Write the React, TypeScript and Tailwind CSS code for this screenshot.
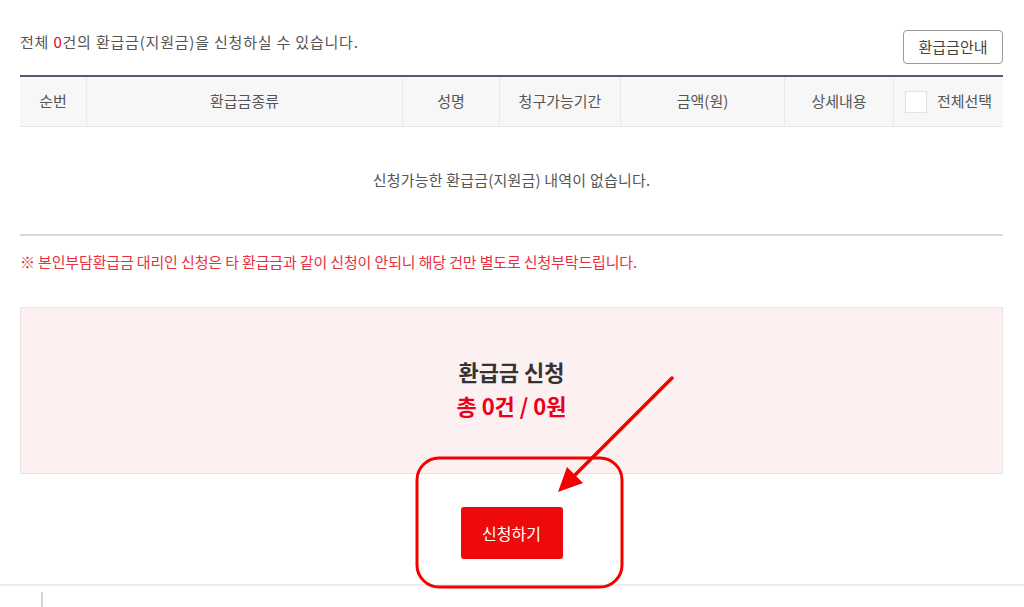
const columns = [
  { label: "순번", width: "w-[66px]" },
  { label: "환급금종류", width: "w-[316px]" },
  { label: "성명", width: "w-[97px]" },
  { label: "청구가능기간", width: "w-[121px]" },
  { label: "금액(원)", width: "w-[164px]" },
  { label: "상세내용", width: "w-[109px]" },
]

export default function App() {
  return (
    <div
      className="relative w-[1024px] h-[607px] overflow-hidden bg-white text-[#555]"
      style={{ fontFamily: '"Noto Sans CJK KR", "Noto Sans", sans-serif' }}
    >
      <div className="pl-[20px] pr-[21px] pt-[30px] w-[1024px]">
        {/* summary + guide button */}
        <div className="flex justify-between items-start h-[34px] mb-[11px]">
          <p className="mt-[2px] text-[15px] leading-[20px] tracking-[0.8px] text-[#555]">
            전체 <span className="text-[#e8001c]">0</span>건의 환급금(지원금)을 신청하실 수 있습니다.
          </p>
          <button className="h-[34px] w-[100px] rounded-[4px] border border-[#9a9a9a] bg-white text-[15px] text-[#444]">
            환급금안내
          </button>
        </div>

        {/* table */}
        <div className="border-t-2 border-[#555a6e]">
          <div className="flex h-[50px] bg-[#f7f7f7] border-b border-[#e6e6e6] text-[15px] text-[#555]">
            {columns.map((c, i) => (
              <div
                key={c.label}
                className={`${c.width} flex items-center justify-center ${i > 0 ? "border-l border-[#e9e9e9]" : ""}`}
              >
                {c.label}
              </div>
            ))}
            <div className="flex-1 flex items-center justify-center gap-[10px] border-l border-[#e9e9e9]">
              <span className="w-[22px] h-[22px] bg-white border border-[#e3e3e3]" />
              <span>전체선택</span>
            </div>
          </div>
          <div className="h-[109px] flex items-center justify-center border-b-2 border-[#d8d8dc] text-[15px] tracking-[0.2px] text-[#555]">
            신청가능한 환급금(지원금) 내역이 없습니다.
          </div>
        </div>

        <p className="mt-[16px] text-[15px] leading-[20px] tracking-[-0.15px] text-[#e8303f]">
          ※ 본인부담환급금 대리인 신청은 타 환급금과 같이 신청이 안되니 해당 건만 별도로 신청부탁드립니다.
        </p>

        {/* total box */}
        <div className="mt-[35px] h-[167px] pb-[6px] flex flex-col items-center justify-center bg-[#fdf0f1] border border-[#ece2e4] font-bold text-[22px] leading-[34px]">
          <div className="text-[#333]">환급금 신청</div>
          <div className="text-[#e8001c]">총 0건 / 0원</div>
        </div>

        <div className="flex justify-center mt-[33px] mb-[25px]">
          <button className="w-[102px] h-[52px] rounded-[3px] bg-[#ee0a0a] text-white text-[16px]">
            신청하기
          </button>
        </div>
      </div>

      <div className="border-t-2 border-[#ececec]" />
      <div className="ml-[41px] mt-[6px] w-[2px] h-[20px] bg-[#d4d4d4]" />

      {/* annotation overlay */}
      <svg className="absolute inset-0 pointer-events-none" width="1024" height="607" viewBox="0 0 1024 607">
        <rect x="417" y="458" width="205" height="129" rx="22" fill="none" stroke="#f50000" strokeWidth="3" />
        <line x1="672" y1="378" x2="570" y2="480" stroke="#f50000" strokeWidth="3.5" strokeLinecap="round" />
        <polygon points="558,492 567,467 583,483" fill="#f50000" />
      </svg>
    </div>
  )
}
